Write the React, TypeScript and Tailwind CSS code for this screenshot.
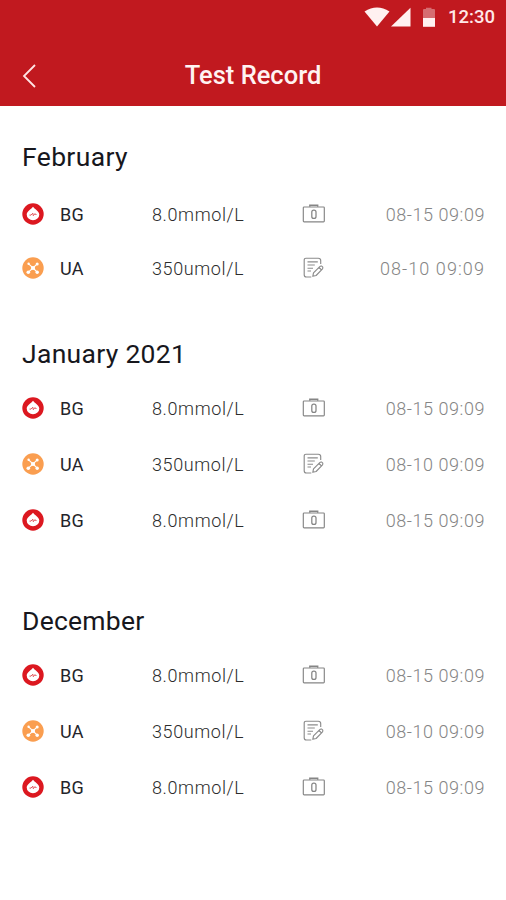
type Kind = "BG" | "UA";

interface TestRecord {
  kind: Kind;
  date: string;
  wide?: boolean;
}

interface Section {
  title: string;
  className: string;
  headingClass: string;
  rowClass: string;
  records: TestRecord[];
}

const bg: TestRecord = { kind: "BG", date: "08-15 09:09" };
const ua: TestRecord = { kind: "UA", date: "08-10 09:09" };

const sections: Section[] = [
  {
    title: "February",
    className: "mt-[31px] gap-[10px]",
    headingClass: "tracking-[0.350px]",
    rowClass: "h-[54px]",
    records: [bg, { ...ua, wide: true }],
  },
  {
    title: "January 2021",
    className: "mt-[39px] gap-[6px]",
    headingClass: "tracking-[0.300px]",
    rowClass: "h-14",
    records: [bg, ua, bg],
  },
  {
    title: "December",
    className: "mt-[53px] gap-[6px]",
    headingClass: "tracking-[0.250px]",
    rowClass: "h-14",
    records: [bg, ua, bg],
  },
];

function GlucoseIcon() {
  return (
    <svg viewBox="0 0 22 22" className="size-[22px]">
      <circle cx="11" cy="11" r="10.700" fill="#dc1820" />
      <path d="M11 3.700C9.600 5.800 4.700 8.300 4.700 11.500a6.300 5.800 0 0 0 12.600 0C17.300 8.300 12.400 5.800 11 3.700Z" fill="#fff" />
      <path d="M7.500 12.100h1.500l1.800-1.900.5 2.500 1.700-2.100.5.900h1" fill="none" stroke="#e2535a" strokeWidth="1" />
    </svg>
  );
}

function UricIcon() {
  return (
    <svg viewBox="0 0 22 22" className="size-[22px]">
      <circle cx="11" cy="11" r="10.700" fill="#fa9e50" />
      <path d="m6.600 6.800 4.400 4.200 4.200-4.100M11 11l-4.600 4.100M11 11l4.200 4.200" fill="none" stroke="#fff" strokeWidth="1.100" />
      <g fill="#fff">
        <circle cx="6.600" cy="6.800" r="1.200" />
        <circle cx="15.200" cy="6.900" r="1.500" />
        <circle cx="11" cy="11" r="2.100" />
        <circle cx="6.300" cy="15.200" r="1.800" />
        <circle cx="15.200" cy="15.200" r="1.700" />
      </g>
    </svg>
  );
}

function MeterIcon() {
  return (
    <svg viewBox="0 0 24 22" className="h-[22px] w-6" fill="none" stroke="#858585" strokeWidth="1.150">
      <rect x="1.300" y="4" width="21" height="14.800" rx="0.800" />
      <path d="M7.800 3.700V2.200h7.900v1.500" strokeWidth="1.400" />
      <rect x="9.800" y="7" width="4.200" height="8.400" rx="2" strokeWidth="1.250" />
    </svg>
  );
}

function NoteIcon() {
  return (
    <svg viewBox="0 0 24 22" className="h-[22px] w-6" fill="none" stroke="#8c8c8c" strokeWidth="1.150" strokeLinejoin="round">
      <path d="M9.300 20H4.500Q2.200 20 2.200 17.700V3Q2.200 1.200 4 1.200h12.300Q18.700 1.200 18.700 3.500V7" />
      <path d="M5.500 4.800h10.300M5.500 8h7.300M5.500 11.200h5.500M5.500 14h3.500" />
      <path d="m10.800 19.300.7-3.500 6-6q1-1 2.200-.7l.9.800q.7 1.100-.3 2.200l-6.200 6.400ZM16.900 10.500l2.500 2.200" />
    </svg>
  );
}

function StatusBar() {
  return (
    <div className="flex h-[34px] items-center justify-end pr-[11px]">
      <svg viewBox="0 0 26 20" className="mr-px h-5 w-[26px]">
        <path d="M.5 4.500Q13-3.500 25.500 4.500L13 19.500Z" fill="#fff1f0" />
      </svg>
      <svg viewBox="0 0 20 20" className="h-5 w-5">
        <path d="M19.500.7v18.800H0Z" fill="#fff1f0" />
      </svg>
      <svg viewBox="0 0 14 20" className="ml-[11px] h-5 w-[14px]">
        <path d="M1 11V3q0-1 1-1h2V.800h5.500V2H12q1 0 1 1v8Z" fill="#d66d71" />
        <path d="M1 11h12v8.800H1Z" fill="#fff1f0" />
      </svg>
      <span className="ml-3 text-[18.500px] leading-[34px] font-medium text-[#ffe8e8]">12:30</span>
    </div>
  );
}

function RecordRow({ record, className }: { record: TestRecord; className: string }) {
  const isBg = record.kind === "BG";
  const nudge = isBg ? "pt-px" : "pt-[2px]";
  return (
    <li className={`flex items-center ${className}`}>
      <div className="w-[38px]">{isBg ? <GlucoseIcon /> : <UricIcon />}</div>
      <span className={`w-[92px] text-[18px] tracking-[0.300px] text-[#24242a] ${nudge}`}>{record.kind}</span>
      <span className={`w-[150px] text-[18px] font-light tracking-[0.600px] text-[#2c2c2c] ${nudge}`}>
        {isBg ? "8.0mmol/L" : "350umol/L"}
      </span>
      {isBg ? <MeterIcon /> : <NoteIcon />}
      <span
        className={`ml-auto text-[18px] font-light text-[#858585] ${nudge} ${record.wide ? "tracking-[1.080px]" : "tracking-[0.560px]"}`}
      >
        {record.date}
      </span>
    </li>
  );
}

export default function App() {
  return (
    <div className="h-[900px] w-[506px] overflow-hidden bg-white font-['Roboto',sans-serif]">
      <header className="h-[105.500px] bg-[#c1191f]">
        <StatusBar />
        <div className="grid h-[83px] grid-cols-[1fr_auto_1fr] items-center">
          <svg viewBox="0 0 14 24" className="ml-[22px] h-6 w-[14px]" fill="none" stroke="#ffe5e5" strokeWidth="1.800">
            <path d="M13 1 2 12l11 11" />
          </svg>
          <h1 className="text-[25.500px] font-medium text-[#fff3f2]">Test Record</h1>
        </div>
      </header>
      <main className="flex flex-col pr-[21px] pl-[22px]">
        {sections.map((section) => (
          <section key={section.title} className={`flex flex-col ${section.className}`}>
            <h2 className={`h-10 text-[26.500px] leading-10 text-[#17171d] ${section.headingClass}`}>{section.title}</h2>
            <ul>
              {section.records.map((record, i) => (
                <RecordRow key={i} record={record} className={section.rowClass} />
              ))}
            </ul>
          </section>
        ))}
      </main>
    </div>
  );
}
